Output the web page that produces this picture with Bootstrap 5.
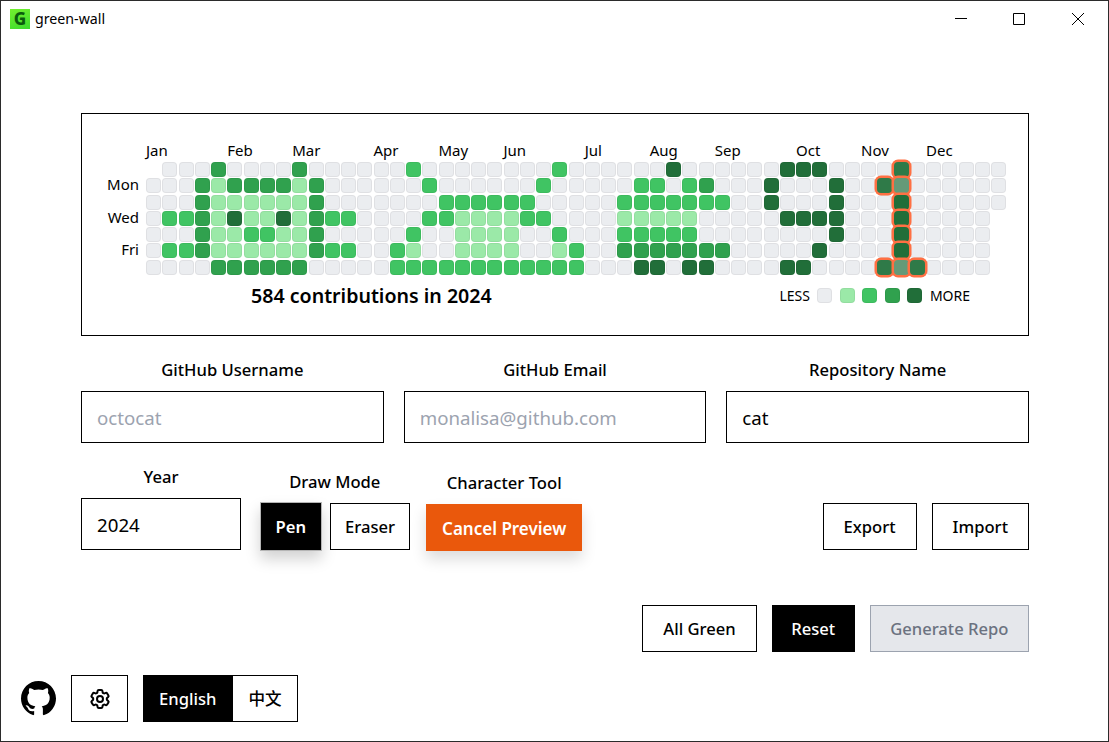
<!DOCTYPE html>
<html lang="en">
<head>
  <meta charset="UTF-8">
  <meta name="viewport" content="width=device-width, initial-scale=1">
  <title>green-wall</title>
  <link href="https://cdn.jsdelivr.net/npm/bootstrap@5.3.0/dist/css/bootstrap.min.css" rel="stylesheet">
  <style>
      html, body { height: 100%; overflow: hidden; }
      body {
          font-family: "Noto Sans", "Noto Sans CJK SC", sans-serif;
          color: #000;
          background: #fff;
      }
      #app-window {
          width: 1109px;
          height: 742px;
          border: 1px solid #2b2b2b;
      }
      .title-bar { height: 36px; padding-left: 9px; padding-right: 1px; font-size: 14.2px; }
      .title-left { gap: 5px; }
      .app-logo {
          width: 20px; height: 20px;
          background: linear-gradient(160deg, #74f02f, #3bdc2e);
          color: #0b5b0d;
          font-weight: 800; font-size: 17px; line-height: 20px; text-align: center;
      }
      .win-btn { width: 58.5px; height: 36px; }
      .win-btn svg { display: block; }
      .main-pane { padding: 76px 79px 0 80px; }
      .wall-frame { border: 1px solid #000; height: 223px; padding: 28px 0 0 25px; }
      .wall-inner { width: 900px; }
      .month-row {
          display: grid;
          grid-template-columns: repeat(53, 15px);
          column-gap: 1.25px;
          height: 20px;
          margin-left: 39px;
          font-size: 15px;
          line-height: 17px;
          white-space: nowrap;
      }
      .wall-body { display: flex; }
      .day-labels {
          width: 39px;
          display: grid;
          grid-template-rows: repeat(7, 15px);
          row-gap: 1.25px;
          font-size: 15px; line-height: 13px; text-align: right;
          padding-right: 7px;
      }
      .wall-grid {
          display: grid;
          grid-template-rows: repeat(7, 15px);
          grid-template-columns: repeat(53, 15px);
          grid-auto-flow: column;
          gap: 1.25px;
      }
      .day-cell { border-radius: 4px; border: 1px solid rgba(0,0,0,.05); }
      .lv-x { visibility: hidden; }
      .lv-0 { background: #ebedf0; }
      .lv-1 { background: #9be9a8; }
      .lv-2 { background: #40c463; }
      .lv-3 { background: #30a14e; }
      .lv-4 { background: #216e39; }
      .lv-p, .lv-q, .lv-r { border: 0; box-shadow: 0 0 0 2.5px #ff7043; z-index: 1; }
      .lv-p { background: #2f7a48; }
      .lv-q { background: #659a78; }
      .lv-r { background: #216e39; }
      .wall-foot { margin-top: 9px; padding-left: 144px; padding-right: 37px; }
      .wall-total { font-size: 19.6px; font-weight: 600; line-height: 24px; }
      .legend-text { font-size: 14px; gap: 7.5px; }
      .legend-cell { width: 15px; height: 15px; }
      .field-label { font-size: 16.6px; font-weight: 500; text-align: center; line-height: 22px; margin-bottom: 10px; }
      .mode-label { margin-bottom: 9px; }
      .form-control.wall-input {
          border: 1px solid #000;
          border-radius: 0;
          height: 52px;
          padding: 0 15px;
          font-size: 18.7px;
          color: #000;
      }
      .wall-input::placeholder { color: #9ca3af; }
      .fields-row { display: grid; grid-template-columns: repeat(3, 1fr); gap: 20px; margin-top: 23px; }
      .tool-row { margin-top: 23px; }
      .year-col { width: 160px; margin-bottom: 1px; }
      .mode-col { margin-left: 18.5px; }
      .btn.wall-btn {
          border: 1px solid #000;
          border-radius: 0;
          background: #fff;
          color: #000;
          font-size: 16.6px;
          font-weight: 500;
          height: 47px;
          padding: 2px 20px 0;
      }
      .btn.wall-btn.tight-btn { padding: 2px 14px 0; }
      .btn.wall-btn.is-active { background: #000; color: #fff; }
      .btn.wall-btn.pen-btn { box-shadow: 0 8px 14px rgba(0,0,0,.18); border-color: #b5b5b5; width: 62.5px; height: 49px; font-weight: 600; }
      .btn.wall-btn.preview-btn { background: #ea580c; border-color: #ea580c; color: #fff; box-shadow: 0 8px 14px rgba(0,0,0,.14); font-size: 17px; font-weight: 600; padding: 2px 15px 0; }
      .btn.wall-btn.reset-btn { padding: 2px 18.5px 0; }
      .btn.wall-btn.disabled-btn { background: #e5e7eb; color: #6b7280; border-color: #9ca3af; padding: 2px 19.5px 0; }
      .export-group { gap: 15px; margin-bottom: 1px; }
      .action-row { margin-top: 54px; gap: 15px; }
      .foot-row { margin-top: 23px; margin-left: -60px; gap: 15px; }
      .btn.wall-btn.gear-btn { width: 57px; padding: 0; }
      .btn.wall-btn.lang-btn { padding: 2px 15px 0; }
  </style>
</head>
<body>
  <div id="app-window" class="d-flex flex-column">
    <div class="title-bar d-flex align-items-center justify-content-between flex-shrink-0">
      <div class="title-left d-flex align-items-center">
        <div class="app-logo">G</div>
        <span>green-wall</span>
      </div>
      <div class="d-flex">
        <div class="win-btn d-flex align-items-center justify-content-center">
          <svg width="12" height="12" viewBox="0 0 12 12"><path d="M0 5.5h12" stroke="#000" fill="none"/></svg>
        </div>
        <div class="win-btn d-flex align-items-center justify-content-center">
          <svg width="12" height="12" viewBox="0 0 12 12"><path d="M.5.5h11v11H.5z" stroke="#000" fill="none"/></svg>
        </div>
        <div class="win-btn d-flex align-items-center justify-content-center">
          <svg width="12" height="12" viewBox="0 0 12 12"><path d="M0 0l12 12M12 0L0 12" stroke="#000" fill="none"/></svg>
        </div>
      </div>
    </div>

    <div class="main-pane flex-grow-1">
      <div class="wall-frame">
        <div class="wall-inner">
          <div class="month-row" id="months"></div>
          <div class="wall-body">
            <div class="day-labels">
              <span></span><span>Mon</span><span></span><span>Wed</span><span></span><span>Fri</span><span></span>
            </div>
            <div class="wall-grid" id="grid"></div>
          </div>
          <div class="wall-foot d-flex align-items-center justify-content-between">
            <div class="wall-total">584 contributions in 2024</div>
            <div class="d-flex align-items-center legend-text">
              <span>LESS</span>
              <div class="day-cell legend-cell lv-0"></div>
              <div class="day-cell legend-cell lv-1"></div>
              <div class="day-cell legend-cell lv-2"></div>
              <div class="day-cell legend-cell lv-3"></div>
              <div class="day-cell legend-cell lv-4"></div>
              <span>MORE</span>
            </div>
          </div>
        </div>
      </div>

      <div class="fields-row">
        <div>
          <div class="field-label">GitHub Username</div>
          <input class="form-control wall-input" placeholder="octocat">
        </div>
        <div>
          <div class="field-label">GitHub Email</div>
          <input class="form-control wall-input" placeholder="monalisa@github.com">
        </div>
        <div>
          <div class="field-label">Repository Name</div>
          <input class="form-control wall-input" value="cat">
        </div>
      </div>

      <div class="tool-row d-flex align-items-end">
        <div class="year-col">
          <div class="field-label">Year</div>
          <input class="form-control wall-input" value="2024">
        </div>
        <div class="mode-col">
          <div class="field-label mode-label">Draw Mode</div>
          <div class="d-flex align-items-center gap-2">
            <button class="btn wall-btn tight-btn pen-btn is-active">Pen</button>
            <button class="btn wall-btn tight-btn">Eraser</button>
          </div>
        </div>
        <div class="ms-3">
          <div class="field-label">Character Tool</div>
          <button class="btn wall-btn preview-btn">Cancel Preview</button>
        </div>
        <div class="ms-auto d-flex export-group">
          <button class="btn wall-btn">Export</button>
          <button class="btn wall-btn">Import</button>
        </div>
      </div>

      <div class="action-row d-flex justify-content-end">
        <button class="btn wall-btn">All Green</button>
        <button class="btn wall-btn reset-btn is-active">Reset</button>
        <button class="btn wall-btn disabled-btn">Generate Repo</button>
      </div>

      <div class="foot-row d-flex align-items-center">
        <svg width="35" height="35" viewBox="0 0 16 16"><path fill="#000" d="M8 0C3.58 0 0 3.58 0 8c0 3.54 2.29 6.53 5.47 7.59.4.07.55-.17.55-.38 0-.19-.01-.82-.01-1.49-2.01.37-2.53-.49-2.69-.94-.09-.23-.48-.94-.82-1.13-.28-.15-.68-.52-.01-.53.63-.01 1.08.58 1.23.82.72 1.21 1.87.87 2.33.66.07-.52.28-.87.51-1.07-1.78-.2-3.64-.89-3.64-3.95 0-.87.31-1.59.82-2.15-.08-.2-.36-1.02.08-2.12 0 0 .67-.21 2.2.82.64-.18 1.32-.27 2-.27s1.36.09 2 .27c1.53-1.04 2.2-.82 2.2-.82.44 1.1.16 1.92.08 2.12.51.56.82 1.27.82 2.15 0 3.07-1.87 3.75-3.65 3.95.29.25.54.73.54 1.48 0 1.07-.01 1.93-.01 2.2 0 .21.15.46.55.38A8.01 8.01 0 0 0 16 8c0-4.42-3.58-8-8-8z"/></svg>
        <button class="btn wall-btn gear-btn d-flex align-items-center justify-content-center">
          <svg width="24" height="24" viewBox="0 0 24 24" fill="none" stroke="#000" stroke-width="2" stroke-linecap="round" stroke-linejoin="round"><path d="M9.594 3.94c.09-.542.56-.94 1.11-.94h2.593c.55 0 1.02.398 1.11.94l.213 1.281c.063.374.313.686.645.87.074.04.147.083.22.127.325.196.72.257 1.075.124l1.217-.456a1.125 1.125 0 0 1 1.37.49l1.296 2.247a1.125 1.125 0 0 1-.26 1.431l-1.003.827c-.293.241-.438.613-.43.992a7.723 7.723 0 0 1 0 .255c-.008.378.137.75.43.991l1.004.827c.424.35.534.955.26 1.43l-1.298 2.247a1.125 1.125 0 0 1-1.369.491l-1.217-.456c-.355-.133-.75-.072-1.076.124a6.47 6.47 0 0 1-.22.128c-.331.183-.581.495-.644.869l-.213 1.281c-.09.543-.56.94-1.11.94h-2.594c-.55 0-1.019-.398-1.11-.94l-.213-1.281c-.062-.374-.312-.686-.644-.87a6.52 6.52 0 0 1-.22-.127c-.325-.196-.72-.257-1.076-.124l-1.217.456a1.125 1.125 0 0 1-1.369-.49l-1.297-2.247a1.125 1.125 0 0 1 .26-1.431l1.004-.827c.292-.24.437-.613.43-.991a6.932 6.932 0 0 1 0-.255c.007-.38-.138-.751-.43-.992l-1.004-.827a1.125 1.125 0 0 1-.26-1.43l1.297-2.247a1.125 1.125 0 0 1 1.37-.491l1.216.456c.356.133.751.072 1.076-.124.072-.044.146-.086.22-.128.332-.183.582-.495.644-.869l.214-1.28Z"/><path d="M15 12a3 3 0 1 1-6 0 3 3 0 0 1 6 0Z"/></svg>
        </button>
        <div class="d-flex">
          <button class="btn wall-btn lang-btn is-active">English</button>
          <button class="btn wall-btn lang-btn">中文</button>
        </div>
      </div>
    </div>
  </div>

  <script>
      // one string per weekday, x = no cell, p/q/r = cells under the character preview
      const rows = [
          'x00030000300000020000000020000004000000444' + '0000p000000',
          '0003133331300000020000002000002202300040004' + '00pq000000',
          '0003111111300000002222220000022222220040004' + '000r000000',
          '0223141141322000022111122000011111000004444' + '000r00000x',
          '0003112211300000200111100200022222000000004' + '000r00000x',
          '0223111111322002100111100120033333330000040' + '000r00000x',
          '0000333333000002222222222220004404400004400' + '00pqp0000x'
      ];
      const months = [['Jan', 0], ['Feb', 5], ['Mar', 9], ['Apr', 14], ['May', 18], ['Jun', 22],
                      ['Jul', 27], ['Aug', 31], ['Sep', 35], ['Oct', 40], ['Nov', 44], ['Dec', 48]];

      const monthRow = document.getElementById('months');
      months.forEach(([name, col]) => {
          const span = document.createElement('span');
          span.textContent = name;
          span.style.gridColumnStart = col + 1;
          monthRow.appendChild(span);
      });

      const grid = document.getElementById('grid');
      for (let c = 0; c < 53; c++) {
          for (let r = 0; r < 7; r++) {
              const div = document.createElement('div');
              div.className = 'day-cell lv-' + rows[r][c];
              grid.appendChild(div);
          }
      }
  </script>
</body>
</html>
